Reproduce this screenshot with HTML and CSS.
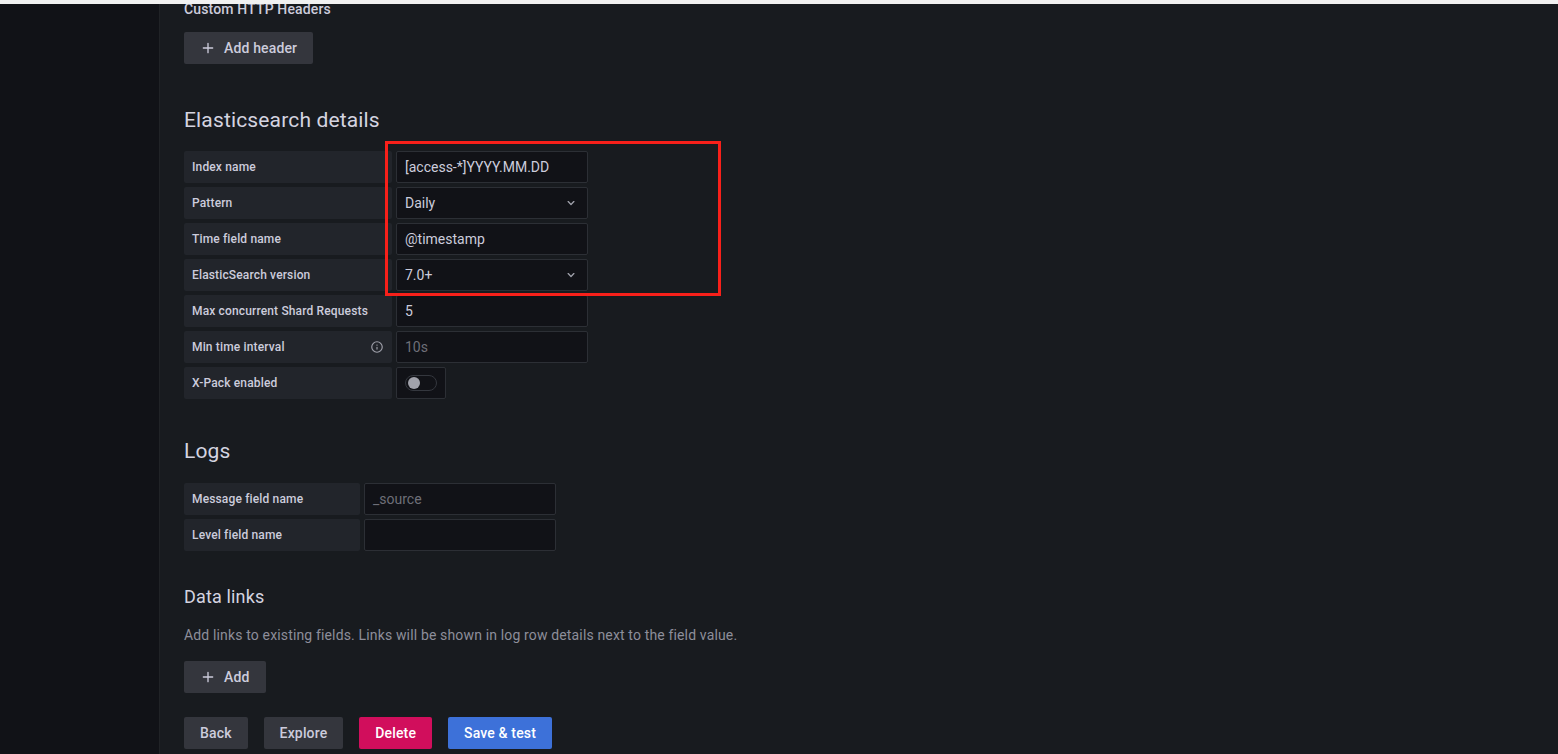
FILE: index.html
```html
<!DOCTYPE html>
<html lang="en">
<head>
<meta charset="utf-8">
<title>Elasticsearch data source</title>
<link rel="stylesheet" href="styles.css">
</head>
<body>
<div class="topbar"></div>
<div class="layout">
  <aside class="sidebar"></aside>
  <main class="content">
    <div class="field-title">Custom HTTP Headers</div>
    <button class="btn btn-secondary btn-first">
      <svg class="btn-icon" viewBox="0 0 24 24"><path d="M19 11h-6V5a1 1 0 0 0-2 0v6H5a1 1 0 0 0 0 2h6v6a1 1 0 0 0 2 0v-6h6a1 1 0 0 0 0-2Z"/></svg>
      Add header
    </button>

    <h3 class="section-title es-title">Elasticsearch details</h3>
    <div class="rows es-rows">
      <div class="red-box"></div>
      <div class="inline-field">
        <div class="inline-label w26">Index name</div>
        <div class="input w24">[access-*]YYYY.MM.DD</div>
      </div>
      <div class="inline-field">
        <div class="inline-label w26">Pattern</div>
        <div class="input select w24">Daily
          <svg class="chev" viewBox="0 0 24 24"><path d="M17 9.17a1 1 0 0 0-1.41 0L12 12.71 8.46 9.17a1 1 0 0 0-1.41 0 1 1 0 0 0 0 1.42l4.24 4.24a1 1 0 0 0 1.42 0L17 10.59a1 1 0 0 0 0-1.42Z"/></svg>
        </div>
      </div>
      <div class="inline-field">
        <div class="inline-label w26">Time field name</div>
        <div class="input w24">@timestamp</div>
      </div>
      <div class="inline-field">
        <div class="inline-label w26">ElasticSearch version</div>
        <div class="input select w24">7.0+
          <svg class="chev" viewBox="0 0 24 24"><path d="M17 9.17a1 1 0 0 0-1.41 0L12 12.71 8.46 9.17a1 1 0 0 0-1.41 0 1 1 0 0 0 0 1.42l4.24 4.24a1 1 0 0 0 1.42 0L17 10.59a1 1 0 0 0 0-1.42Z"/></svg>
        </div>
      </div>
      <div class="inline-field">
        <div class="inline-label w26">Max concurrent Shard Requests</div>
        <div class="input w24">5</div>
      </div>
      <div class="inline-field">
        <div class="inline-label w26">Min time interval
          <svg class="info" viewBox="0 0 24 24"><path d="M12 2a10 10 0 1 0 10 10A10 10 0 0 0 12 2Zm0 18a8 8 0 1 1 8-8 8 8 0 0 1-8 8Zm0-8.5a1 1 0 0 0-1 1v3a1 1 0 0 0 2 0v-3a1 1 0 0 0-1-1Zm0-4a1.25 1.25 0 1 0 1.25 1.25A1.25 1.25 0 0 0 12 7.5Z"/></svg>
        </div>
        <div class="input placeholder w24">10s</div>
      </div>
      <div class="inline-field">
        <div class="inline-label w26">X-Pack enabled</div>
        <div class="switch-box"><span class="switch"><span class="knob"></span></span></div>
      </div>
    </div>

    <h3 class="section-title logs-title">Logs</h3>
    <div class="rows logs-rows">
      <div class="inline-field">
        <div class="inline-label w22">Message field name</div>
        <div class="input placeholder w24">_source</div>
      </div>
      <div class="inline-field">
        <div class="inline-label w22">Level field name</div>
        <div class="input w24"></div>
      </div>
    </div>

    <h5 class="sub-title">Data links</h5>
    <p class="desc">Add links to existing fields. Links will be shown in log row details next to the field value.</p>
    <button class="btn btn-secondary btn-add">
      <svg class="btn-icon" viewBox="0 0 24 24"><path d="M19 11h-6V5a1 1 0 0 0-2 0v6H5a1 1 0 0 0 0 2h6v6a1 1 0 0 0 2 0v-6h6a1 1 0 0 0 0-2Z"/></svg>
      Add
    </button>

    <div class="actions">
      <button class="btn btn-secondary">Back</button>
      <button class="btn btn-secondary">Explore</button>
      <button class="btn btn-destructive">Delete</button>
      <button class="btn btn-primary">Save &amp; test</button>
    </div>
  </main>
</div>
</body>
</html>
```

FILE: styles.css
```css
* { box-sizing: border-box; }

html, body {
  margin: 0;
  padding: 0;
  background: #181b1f;
  font-family: Roboto, "Liberation Sans", Arial, sans-serif;
  color: #ccccdc;
  letter-spacing: 0.15px;
  overflow: hidden;
}

.topbar {
  position: fixed;
  top: 0;
  left: 0;
  right: 0;
  height: 4px;
  background: #f1f1f1;
  z-index: 10;
}

.layout {
  display: flex;
  min-height: 100vh;
}

.sidebar {
  width: 160px;
  flex: 0 0 160px;
  background: #111217;
  border-right: 1px solid #202226;
}

.content {
  flex: 1;
  padding-left: 24px;
  display: flex;
  flex-direction: column;
  align-items: flex-start;
}

.field-title {
  font-size: 14px;
  font-weight: 500;
  line-height: 18px;
  margin-top: 0;
}

.btn {
  display: inline-flex;
  align-items: center;
  height: 32px;
  padding: 0 16px;
  border: none;
  border-radius: 2px;
  font-family: Roboto, "Liberation Sans", Arial, sans-serif;
  font-size: 14px;
  font-weight: 500;
  letter-spacing: 0.15px;
  line-height: 1;
  cursor: pointer;
}

.btn-secondary {
  background: #34363d;
  color: #ccccdc;
}

.btn-destructive {
  background: #d10e5c;
  color: #ffffff;
}

.btn-primary {
  background: #3d71d9;
  color: #ffffff;
}

.btn-icon {
  width: 16px;
  height: 16px;
  fill: #ccccdc;
  margin-right: 8px;
}

.btn-first { margin-top: 14px; }

.section-title {
  font-size: 21px;
  font-weight: 400;
  line-height: 26px;
  margin: 0;
  color: #d4d4e0;
}

.es-title { margin-top: 43px; }
.logs-title { margin-top: 39px; }

.rows {
  display: flex;
  flex-direction: column;
  gap: 4px;
}

.es-rows {
  margin-top: 18px;
  position: relative;
}

.logs-rows { margin-top: 19px; }

.inline-field {
  display: flex;
  gap: 4px;
  height: 32px;
}

.inline-label {
  display: flex;
  align-items: center;
  justify-content: space-between;
  height: 32px;
  padding: 0 8px;
  background: #22252b;
  border-radius: 2px;
  font-size: 12px;
  font-weight: 500;
  color: #ccccdc;
}

.w26 { width: 208px; }
.w22 { width: 176px; }
.w24 { width: 192px; }

.info {
  width: 14px;
  height: 14px;
  fill: #9fa0aa;
}

.input {
  display: flex;
  align-items: center;
  justify-content: space-between;
  height: 32px;
  padding: 0 8px;
  background: #111217;
  border: 1px solid #2c2f35;
  border-radius: 2px;
  font-size: 14px;
  letter-spacing: 0;
  color: #ccccdc;
}

.placeholder { color: #6e6f78; }

.chev {
  width: 16px;
  height: 16px;
  fill: #9fa0aa;
}

.switch-box {
  width: 50px;
  height: 32px;
  display: flex;
  align-items: center;
  justify-content: center;
  background: #111217;
  border: 1px solid #2c2f35;
  border-radius: 2px;
}

.switch {
  display: flex;
  align-items: center;
  width: 32px;
  height: 16px;
  padding: 0 2px;
  border-radius: 8px;
  background: #111217;
  border: 1px solid #34373e;
}

.knob {
  width: 12px;
  height: 12px;
  border-radius: 50%;
  background: #a1a2ab;
}

.red-box {
  position: absolute;
  left: 201px;
  top: -10px;
  width: 336px;
  height: 155px;
  border: 3px solid #f8201a;
  pointer-events: none;
}

.sub-title {
  font-size: 18px;
  font-weight: 400;
  line-height: 22px;
  margin: 35px 0 0;
  color: #d4d4e0;
}

.desc {
  font-size: 14px;
  line-height: 18px;
  margin: 18px 0 0;
  color: #8d8e9a;
}

.btn-add { margin-top: 17px; }

.actions {
  display: flex;
  gap: 16px;
  margin-top: 24px;
}
```
